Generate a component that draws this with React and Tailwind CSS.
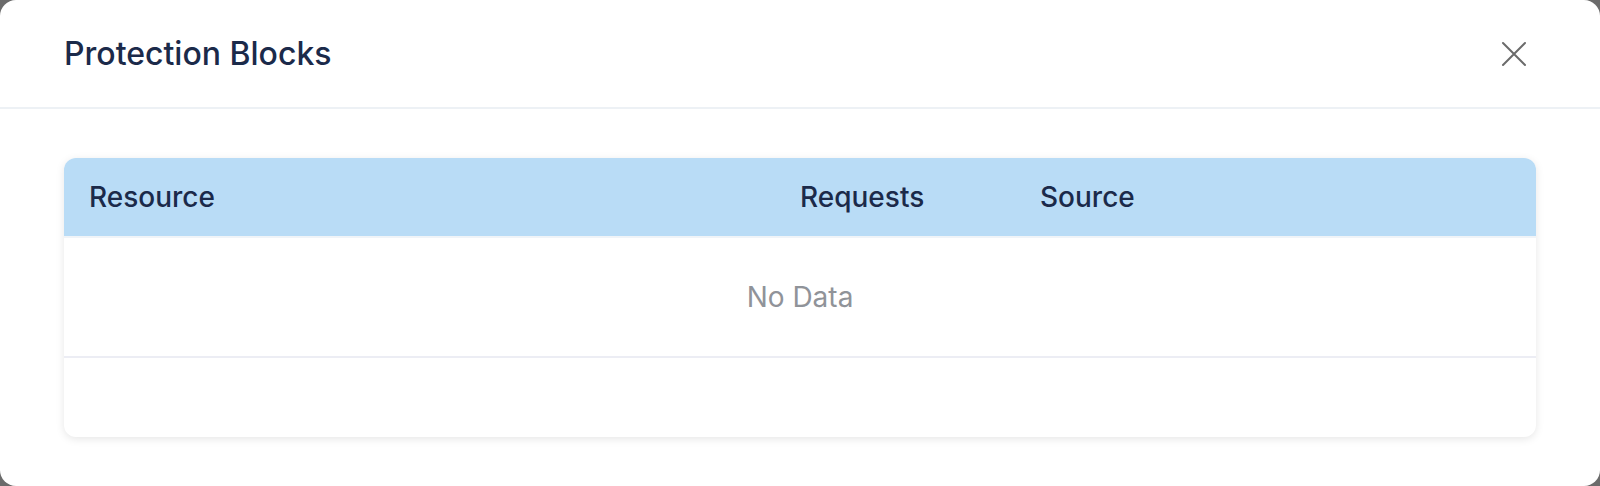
import React from 'react';

const columns = [
  { key: 'resource', label: 'Resource', className: 'flex-1' },
  { key: 'requests', label: 'Requests', className: 'w-[240px]' },
  { key: 'source', label: 'Source', className: 'w-[496px]' },
];

export default function App() {
  return (
    <div className="h-[486px] w-[1600px] bg-[#6b6b6b] font-['Inter','Liberation_Sans',sans-serif]">
      <div className="h-full w-full rounded-2xl bg-white flex flex-col">
        {/* Header */}
        <div className="h-[109px] shrink-0 border-b-2 border-[#edf1f5] flex items-center justify-between pl-[64px] pr-[73px]">
          <h2 className="text-[32px] font-medium text-[#1b2a4a]">Protection Blocks</h2>
          <button className="text-[#6b6b6b] p-0">
            <svg width="26" height="26" viewBox="0 0 26 26" fill="none" stroke="currentColor" strokeWidth="2" strokeLinecap="round">
              <path d="M2 2L24 24M24 2L2 24" />
            </svg>
          </button>
        </div>

        {/* Body */}
        <div className="px-[64px] pt-[49px]">
          <div className="rounded-xl bg-white shadow-[0_2px_8px_rgba(0,0,0,0.10)] overflow-hidden">
            <div className="h-[80px] bg-[#b9dcf6] border-b-2 border-[#f0f4f8] flex items-center pl-[25px]">
              {columns.map((c) => (
                <div key={c.key} className={`${c.className} text-[28px] font-medium text-[#1b2a4a]`}>
                  {c.label}
                </div>
              ))}
            </div>
            <div className="h-[120px] border-b-2 border-[#ecedf4] flex items-center justify-center text-[28px] text-[#909399]">
              No Data
            </div>
            <div className="h-[79px]" />
          </div>
        </div>
      </div>
    </div>
  );
}
